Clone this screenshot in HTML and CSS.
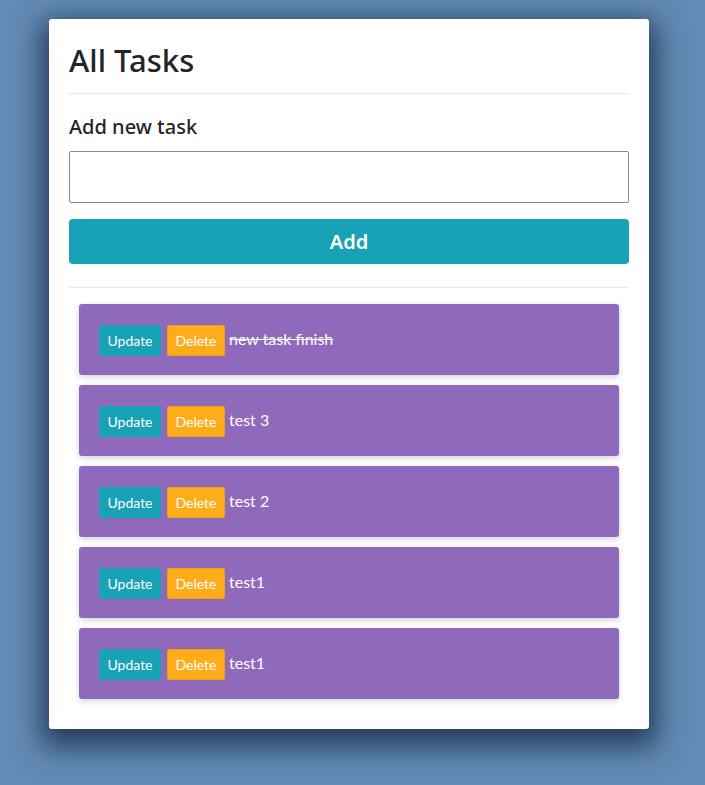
FILE: index.html
```html
<!DOCTYPE html>
<html>
<head>
<meta charset="utf-8">
<link rel="stylesheet" href="styles.css">
</head>
<body>
<div class="card">
  <h1 class="title">All Tasks</h1>
  <hr class="rule">
  <label class="label">Add new task</label>
  <input class="input" type="text">
  <button class="add">Add</button>
  <hr class="rule rule2">
  <ul class="list">
    <li class="item"><button class="btn upd">Update</button><button class="btn del">Delete</button><span class="text done">new task finish</span></li>
    <li class="item"><button class="btn upd">Update</button><button class="btn del">Delete</button><span class="text">test 3</span></li>
    <li class="item"><button class="btn upd">Update</button><button class="btn del">Delete</button><span class="text">test 2</span></li>
    <li class="item"><button class="btn upd">Update</button><button class="btn del">Delete</button><span class="text">test1</span></li>
    <li class="item"><button class="btn upd">Update</button><button class="btn del">Delete</button><span class="text">test1</span></li>
  </ul>
</div>
</body>
</html>
```
FILE: styles.css
```css
html, body { margin: 0; padding: 0; }
body {
  background: #628bb5;
  font-family: "Noto Sans", "Open Sans", sans-serif;
  color: #212529;
  width: 705px;
  height: 785px;
  overflow: hidden;
}
.card {
  margin: 19px 0 0 49px;
  width: 600px;
  box-sizing: border-box;
  background: #fff;
  border-radius: 3px;
  padding: 20px 20px 30px 20px;
  box-shadow: 0 10px 28px 8px rgba(15, 30, 55, 0.72);
}
.title {
  margin: 0;
  font-size: 31px;
  font-weight: 500;
  line-height: 42px;
  height: 42px;
}
.rule {
  border: 0;
  border-top: 1px solid #e8e8e8;
  margin: 12px 0 0 0;
}
.label {
  display: block;
  margin-top: 19px;
  font-size: 20px;
  line-height: 28px;
  font-weight: 500;
}
.input {
  display: block;
  box-sizing: border-box;
  width: 560px;
  height: 52px;
  margin-top: 10px;
  border: 1px solid #8a8a8a;
  border-radius: 2px;
  outline: none;
}
.add {
  display: block;
  width: 560px;
  height: 45px;
  margin-top: 16px;
  border: 0;
  border-radius: 4px;
  background: #17a2b8;
  color: #fff;
  font-family: "Noto Sans", sans-serif;
  font-size: 20px;
  font-weight: 600;
}
.rule2 { margin-top: 23px; }
.list {
  list-style: none;
  margin: 16px 10px 0 10px;
  padding: 0;
  display: flex;
  flex-direction: column;
  gap: 10px;
}
.item {
  height: 71px;
  box-sizing: border-box;
  background: #8f6abc;
  border-radius: 3px;
  box-shadow: 0 2px 6px rgba(0,0,0,0.18);
  display: flex;
  align-items: center;
  padding: 0 20px;
}
.btn {
  height: 31px;
  border: 1px solid transparent;
  border-radius: 2px;
  color: #fff;
  font-family: Lato, "Open Sans", sans-serif;
  font-size: 14px;
  padding: 0;
  margin: 1px 0 0 0;
}
.upd { background: #17a2b8; width: 62px; margin-right: 6px; }
.del { background: #ffac1a; border-color: #f0a010; width: 58px; margin-right: 4px; }
.text {
  color: #fff;
  font-family: Lato, "Open Sans", sans-serif;
  font-size: 16px;
  margin-top: -3px;
}
.done { text-decoration: line-through; }
```
